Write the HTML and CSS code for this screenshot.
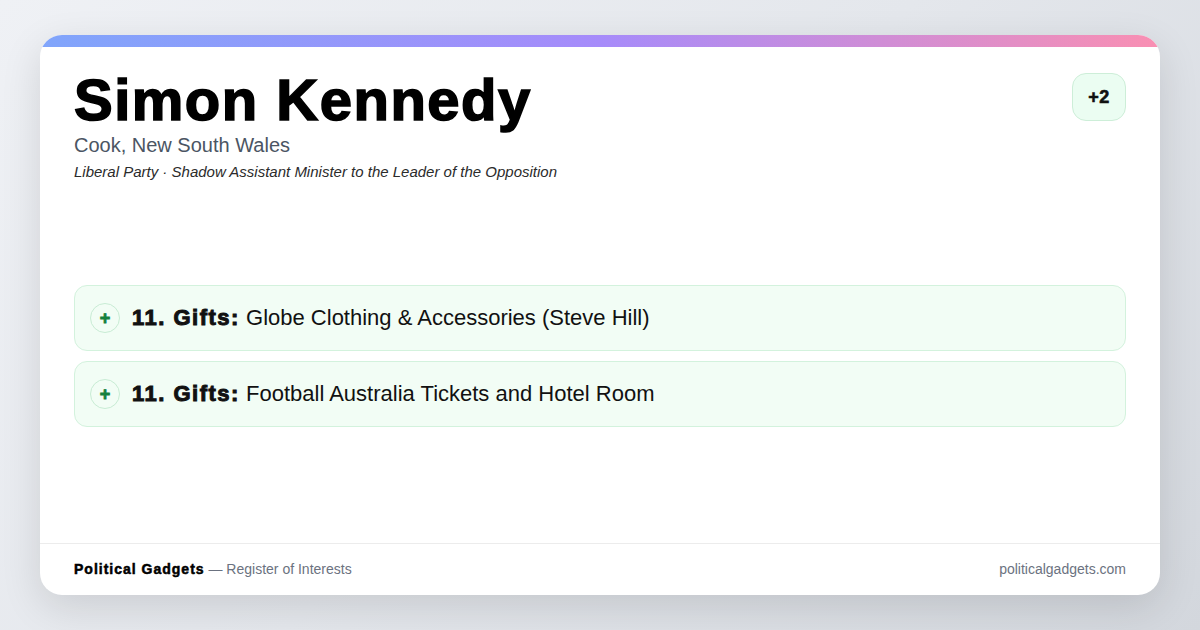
FILE: index.html
```html
<!DOCTYPE html>
<html lang="en">
<head>
    <meta charset="UTF-8">
    <meta name="viewport" content="width=device-width, initial-scale=1.0">
    <title>Simon Kennedy - Register of Interests</title>
    <link rel="stylesheet" href="styles.css">
</head>
<body>
    <div class="card">
        <div class="top-bar"></div>
        <div class="header">
            <div class="who">
                <h1>Simon Kennedy</h1>
                <div class="seat">Cook, New South Wales</div>
                <div class="role">Liberal Party · Shadow Assistant Minister to the Leader of the Opposition</div>
            </div>
            <div class="count">+2</div>
        </div>
        <div class="items">
            <div class="item">
                <span class="plus">+</span>
                <span class="item-text"><b>11. Gifts:</b> Globe Clothing &amp; Accessories (Steve Hill)</span>
            </div>
            <div class="item">
                <span class="plus">+</span>
                <span class="item-text"><b>11. Gifts:</b> Football Australia Tickets and Hotel Room</span>
            </div>
        </div>
        <div class="footer">
            <div><b>Political Gadgets</b> <span class="muted">— Register of Interests</span></div>
            <div class="muted">politicalgadgets.com</div>
        </div>
    </div>
</body>
</html>
```

FILE: styles.css
```css
* {
    box-sizing: border-box;
}
body {
    margin: 0;
    width: 1200px;
    height: 630px;
    padding: 35px 40px;
    font-family: "Liberation Sans", Arial, sans-serif;
    background: linear-gradient(135deg, #eff1f5 0%, #e4e7ec 50%, #d3d7dd 100%);
}
.card {
    height: 560px;
    background-color: #fff;
    border-radius: 22px;
    overflow: hidden;
    box-shadow: 0 12px 40px rgba(0, 0, 0, 0.12);
    display: flex;
    flex-direction: column;
}
.top-bar {
    height: 12px;
    background: linear-gradient(90deg, #80a5fb, #a68bfa 50%, #f98fb2);
}
.header {
    display: flex;
    justify-content: space-between;
    align-items: flex-start;
    padding: 23px 34px 0 34px;
}
h1 {
    margin: 0;
    font-size: 58px;
    line-height: 60px;
    font-weight: 900;
    color: #000;
    -webkit-text-stroke: 1.6px #000;
    letter-spacing: 1.5px;
}
.seat {
    margin-top: 4px;
    font-size: 20px;
    color: #4b5563;
}
.role {
    margin-top: 6px;
    font-size: 15px;
    font-style: italic;
    color: #2b2b2b;
}
.count {
    margin-top: 3px;
    width: 54px;
    height: 48px;
    border-radius: 14px;
    background-color: #ebfdf2;
    border: 1px solid #cdeed8;
    display: flex;
    align-items: center;
    justify-content: center;
    font-size: 18px;
    font-weight: bold;
    color: #111;
    -webkit-text-stroke: 0.6px #111;
    letter-spacing: 0.5px;
}
.items {
    display: flex;
    flex-direction: column;
    gap: 10px;
    padding: 105px 34px 0 34px;
    flex: 1;
}
.item {
    height: 66px;
    display: flex;
    align-items: center;
    gap: 12px;
    padding: 0 15px;
    background-color: #f2fdf5;
    border: 1px solid #d3f2dd;
    border-radius: 13px;
}
.plus {
    width: 30px;
    height: 30px;
    border-radius: 50%;
    border: 1px solid #c8ecd4;
    background-color: #f2fdf5;
    display: flex;
    align-items: center;
    justify-content: center;
    font-size: 18px;
    font-weight: bold;
    color: #15803d;
    -webkit-text-stroke: 0.8px #15803d;
}
.item-text {
    font-size: 22px;
    color: #111;
}
.item-text b {
    -webkit-text-stroke: 1px #111;
    letter-spacing: 1.5px;
}
.footer {
    border-top: 1px solid #ececec;
    height: 52px;
    display: flex;
    justify-content: space-between;
    align-items: center;
    padding: 0 34px 2px 34px;
    font-size: 14px;
}
.footer b {
    color: #000;
    -webkit-text-stroke: 0.5px #000;
    letter-spacing: 1px;
}
.muted {
    color: #6b7280;
}
```
